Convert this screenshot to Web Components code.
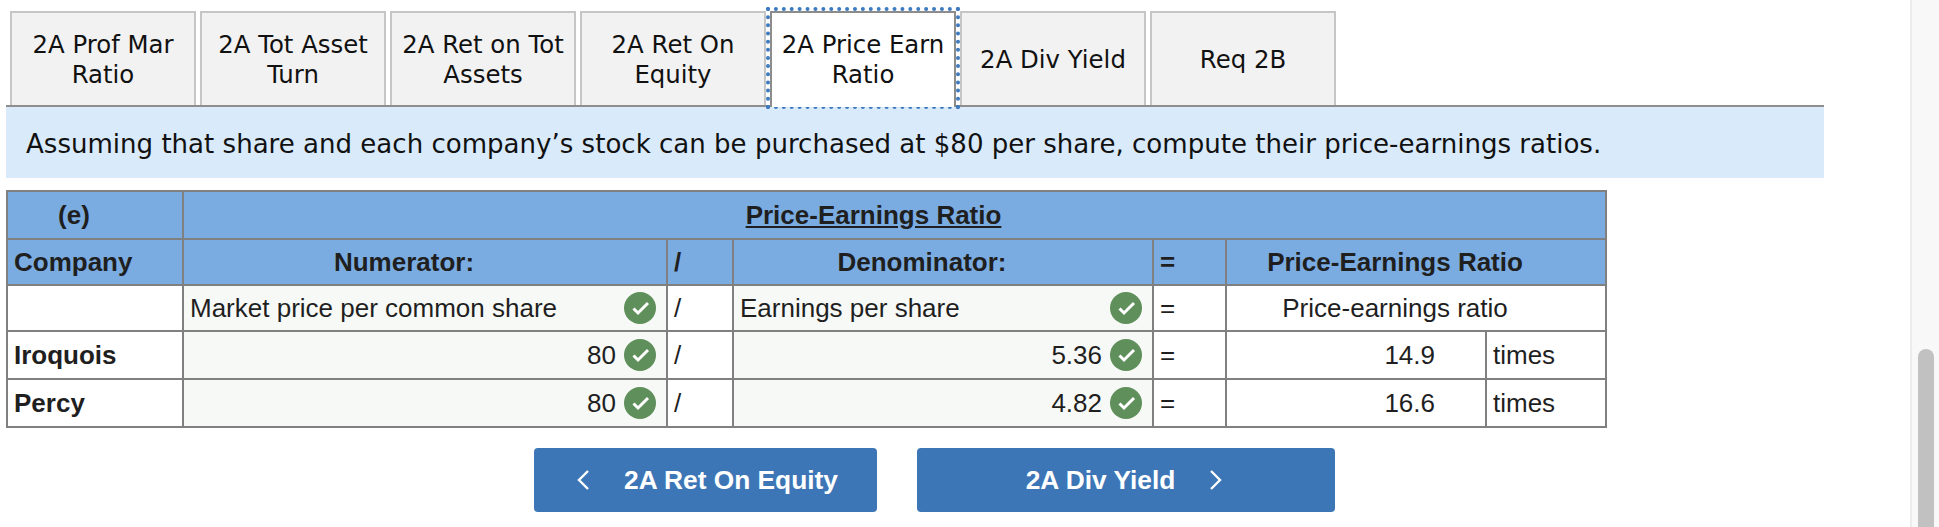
<!DOCTYPE html>
<html>
<head>
<meta charset="utf-8">
<style>
  html, body { margin: 0; height: 527px; overflow: hidden; background: #fff; }
  body { display: flex; font-family: "Liberation Sans", Arial, sans-serif; color: #1f1f1f; }
  main { width: 1910px; box-sizing: border-box; padding-left: 6px; }
</style>
</head>
<body>
<main>
  <tab-bar>
    <tab-item>2A Prof Mar<br>Ratio</tab-item>
    <tab-item>2A Tot Asset<br>Turn</tab-item>
    <tab-item>2A Ret on Tot<br>Assets</tab-item>
    <tab-item>2A Ret On<br>Equity</tab-item>
    <tab-item active>2A Price Earn<br>Ratio</tab-item>
    <tab-item>2A Div Yield</tab-item>
    <tab-item>Req 2B</tab-item>
  </tab-bar>
  <prompt-band>Assuming that share and each company’s stock can be purchased at $80 per share, compute their price-earnings ratios.</prompt-band>
  <ratio-table></ratio-table>
  <nav-row>
    <nav-button dir="prev">2A Ret On Equity</nav-button>
    <nav-button dir="next">2A Div Yield</nav-button>
  </nav-row>
</main>
<fake-scrollbar></fake-scrollbar>

<script>
class TabBar extends HTMLElement {
  constructor() {
    super();
    this.attachShadow({ mode: "open" });
    this.shadowRoot.innerHTML = `
      <style>
        :host { display: flex; width: 1818px; box-sizing: border-box; padding: 11px 0 0 4px; gap: 4px; border-bottom: 2px solid #8e8e8e; }
      </style>
      <slot></slot>`;
  }
}

class TabItem extends HTMLElement {
  constructor() {
    super();
    this.attachShadow({ mode: "open" });
    this.shadowRoot.innerHTML = `
      <style>
        :host { display: flex; align-items: center; justify-content: center; box-sizing: border-box; width: 186px; height: 94px; padding-top: 2px;
          background: #f2f2f2; border: 2px solid #c6c6c6; border-bottom: 0; font: 24.4px/30px "DejaVu Sans", Verdana, sans-serif; color: #111; text-align: center; white-space: nowrap; }
        :host([active]) { position: relative; background: #fff; border-color: #8c8c8c; outline: 4px dotted #3d7abf; z-index: 1; }
        :host([active])::after { content: ""; position: absolute; left: -2px; right: -2px; bottom: -2px; height: 2px; background: #fff; border: solid #8c8c8c; border-width: 0 2px; }
      </style>
      <span><slot></slot></span>`;
  }
}

class PromptBand extends HTMLElement {
  constructor() {
    super();
    this.attachShadow({ mode: "open" });
    this.shadowRoot.innerHTML = `
      <style>
        :host { display: flex; align-items: center; width: 1818px; height: 71px; box-sizing: border-box; padding: 2px 0 0 20px;
          background: #d9eafa; font: 26.06px "DejaVu Sans", Verdana, sans-serif; color: #111; white-space: nowrap; }
      </style>
      <slot></slot>`;
  }
}

class CheckMark extends HTMLElement {
  constructor() {
    super();
    this.attachShadow({ mode: "open" });
    this.shadowRoot.innerHTML = `
      <style>:host { display: block; width: 32px; height: 32px; flex: none; } svg { display: block; }</style>
      <svg width="32" height="32" viewBox="0 0 32 32">
        <circle cx="16" cy="16" r="16" fill="#5f8f5a"/>
        <path d="M9.5 16.5l4.5 4.5L24 11" fill="none" stroke="#fff" stroke-width="3"/>
      </svg>`;
  }
}

class AnswerCell extends HTMLElement {
  constructor() {
    super();
    this.attachShadow({ mode: "open" });
    this.shadowRoot.innerHTML = `
      <style>
        :host { display: flex; align-items: center; gap: 8px; }
        span { flex: 1; }
        :host([num]) span { text-align: right; }
      </style>
      <span><slot></slot></span><check-mark></check-mark>`;
  }
}

class RatioTable extends HTMLElement {
  constructor() {
    super();
    this.attachShadow({ mode: "open" });
    const rows = [
      ["Iroquois", "80", "5.36", "14.9"],
      ["Percy", "80", "4.82", "16.6"],
    ];
    this.shadowRoot.innerHTML = `
      <style>
        :host { display: block; margin-top: 12px; font: 26px "Liberation Sans", Arial, sans-serif; color: #1f1f1f; }
        table { border-collapse: collapse; table-layout: fixed; width: 1599px; }
        th, td { border: 2px solid #808080; padding: 0 6px; height: 44px; box-sizing: border-box; white-space: nowrap; }
        th { background: #7aace2; padding-right: 48px; }
        .l { text-align: left; padding-right: 6px; }
        .b { font-weight: bold; }
        .g { background: #f7f9f6; padding-right: 10px; }
        .c { text-align: center; padding-right: 48px; }
        .r { text-align: right; padding-right: 50px; }
        u { text-underline-offset: 2px; }
      </style>
      <table>
        <colgroup><col style="width:176px"><col style="width:484px"><col style="width:66px"><col style="width:420px"><col style="width:73px"><col style="width:260px"><col style="width:120px"></colgroup>
        <tr style="height:48px"><th>(e)</th><th colspan="6"><u>Price-Earnings Ratio</u></th></tr>
        <tr style="height:46px"><th class="l">Company</th><th>Numerator:</th><th class="l">/</th><th>Denominator:</th><th class="l">=</th><th colspan="2">Price-Earnings Ratio</th></tr>
        <tr style="height:46px"><td></td><td class="g"><answer-cell>Market price per common share</answer-cell></td><td>/</td><td class="g"><answer-cell>Earnings per share</answer-cell></td><td>=</td><td class="c" colspan="2">Price-earnings ratio</td></tr>
        ${rows.map(r => `
          <tr style="height:48px"><td class="b">${r[0]}</td><td class="g"><answer-cell num>${r[1]}</answer-cell></td><td>/</td><td class="g"><answer-cell num>${r[2]}</answer-cell></td><td>=</td><td class="r">${r[3]}</td><td>times</td></tr>
        `).join("")}
      </table>`;
  }
}

class NavRow extends HTMLElement {
  constructor() {
    super();
    this.attachShadow({ mode: "open" });
    this.shadowRoot.innerHTML = `
      <style>:host { display: flex; gap: 40px; margin-top: 20px; padding-left: 528px; }</style>
      <slot></slot>`;
  }
}

class NavButton extends HTMLElement {
  constructor() {
    super();
    this.attachShadow({ mode: "open" });
    const prev = this.getAttribute("dir") === "prev";
    const chevron = `<svg width="14" height="22" viewBox="0 0 14 22"><path d="${prev ? "M12 2L3 11l9 9" : "M2 2l9 9-9 9"}" fill="none" stroke="#fff" stroke-width="2.4"/></svg>`;
    this.shadowRoot.innerHTML = `
      <style>
        :host { display: flex; align-items: center; justify-content: center; gap: 34px; box-sizing: border-box; height: 64px; width: ${prev ? 343 : 418}px; padding-${prev ? "left" : "right"}: 3px;
          background: #3d76b6; border-radius: 4px; color: #fff; font: bold 26.3px "Liberation Sans", Arial, sans-serif; }
        svg { display: block; }
      </style>
      ${prev ? chevron : ""}<span><slot></slot></span>${prev ? "" : chevron}`;
  }
}

class FakeScrollbar extends HTMLElement {
  constructor() {
    super();
    this.attachShadow({ mode: "open" });
    this.shadowRoot.innerHTML = `
      <style>
        :host { display: block; width: 29px; height: 527px; box-sizing: border-box; padding: 349px 5px 0 6px; background: #f8f8f8; border-left: 2px solid #ececec; }
        div { width: 16px; height: 178px; background: #c1c1c1; border-radius: 8px 8px 0 0; }
      </style>
      <div></div>`;
  }
}

customElements.define("tab-bar", TabBar);
customElements.define("tab-item", TabItem);
customElements.define("prompt-band", PromptBand);
customElements.define("check-mark", CheckMark);
customElements.define("answer-cell", AnswerCell);
customElements.define("ratio-table", RatioTable);
customElements.define("nav-row", NavRow);
customElements.define("nav-button", NavButton);
customElements.define("fake-scrollbar", FakeScrollbar);
</script>
</body>
</html>
